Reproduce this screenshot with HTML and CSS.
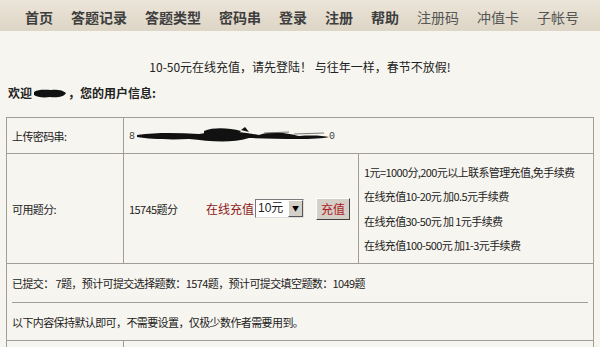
FILE: index.html
```html
<!DOCTYPE html>
<html lang="zh-CN">
<head>
    <meta charset="UTF-8">
    <title>用户信息</title>
    <link rel="stylesheet" href="styles.css">
</head>
<body>
    <div class="nav">
        <a class="nav-item" href="#">首页</a>
        <a class="nav-item" href="#">答题记录</a>
        <a class="nav-item" href="#">答题类型</a>
        <a class="nav-item" href="#">密码串</a>
        <a class="nav-item" href="#">登录</a>
        <a class="nav-item" href="#">注册</a>
        <a class="nav-item" href="#">帮助</a>
        <a class="nav-item light" href="#">注册码</a>
        <a class="nav-item light" href="#">冲值卡</a>
        <a class="nav-item light" href="#">子帐号</a>
    </div>

    <div class="notice">10-50元在线充值，请先登陆！ 与往年一样，春节不放假!</div>

    <div class="welcome">欢迎<svg class="blot" width="34" height="12" viewBox="0 0 34 12"><path d="M1 5 C6 2 12 3 18 3 C24 2 30 3 33 6 C31 10 24 11 17 10 C10 11 4 10 1 8 Z" fill="#111"/></svg>，您的用户信息:</div>

    <table class="info">
        <tr class="row-pass">
            <td class="label">上传密码串:</td>
            <td colspan="2">
                <svg class="scribble" width="210" height="20" viewBox="0 0 210 20">
                    <text x="0" y="13" font-size="10" fill="#444" font-family="Liberation Mono, monospace">8</text>
                    <path d="M8 9 C30 6 50 7 70 8 C90 4 110 5 130 9 C145 4 160 8 170 10 C185 9 195 10 200 11 C190 14 150 13 120 12 C100 18 80 15 60 13 C40 14 20 13 8 11 Z" fill="#111"/>
                    <path d="M75 5 C85 1 100 2 112 5 L108 9 C95 6 85 7 75 8 Z" fill="#111"/>
                    <path d="M112 4 L116 1 L120 6 Z" fill="#111"/>
                    <path d="M135 7 L160 6 M165 8 L195 7" stroke="#777" stroke-width="1"/>
                    <text x="200" y="13" font-size="10" fill="#444" font-family="Liberation Mono, monospace">0</text>
                </svg>
            </td>
        </tr>
        <tr class="row-score">
            <td class="label">可用题分:</td>
            <td class="score-cell">
                <div class="score">
                    <span class="points">15745题分</span>
                    <span class="pay-label">在线充值</span>
                    <span class="select"><span class="select-value">10元</span><span class="select-arrow">▼</span></span>
                    <span class="pay-btn">充值</span>
                </div>
            </td>
            <td class="rates">
                <p>1元=1000分,200元以上联系管理充值,免手续费</p>
                <p>在线充值10-20元 加0.5元手续费</p>
                <p>在线充值30-50元 加 1元手续费</p>
                <p>在线充值100-500元 加1-3元手续费</p>
            </td>
        </tr>
        <tr class="row-info">
            <td colspan="3">
                <p class="submitted">已提交： 7题，预计可提交选择题数：1574题，预计可提交填空题数：1049题</p>
                <div class="rule"></div>
                <p class="hint">以下内容保持默认即可，不需要设置，仅极少数作者需要用到。</p>
            </td>
        </tr>
        <tr class="row-last">
            <td class="label"></td>
            <td colspan="2"></td>
        </tr>
    </table>
</body>
</html>
```

FILE: styles.css
```css
body {
    margin: 0;
    background: #f7f5ef;
    font-family: "Noto Sans CJK SC", "Liberation Sans", sans-serif;
    font-size: 11px;
    color: #222;
    overflow: hidden;
}

.nav {
    height: 31px;
    background: linear-gradient(#ebe5d9, #ddd5c5);
    display: flex;
    align-items: center;
    gap: 18px;
    padding: 2px 0 0 25px;
    box-sizing: border-box;
}

.nav-item {
    font-size: 14px;
    font-weight: bold;
    color: #3e3e3e;
    text-decoration: none;
    line-height: 1;
}

.nav-item.light {
    font-weight: normal;
    color: #555;
}

.notice {
    text-align: center;
    font-size: 12px;
    color: #222;
    margin-top: 28px;
    line-height: 16px;
}

.welcome {
    font-size: 12px;
    font-weight: bold;
    margin: 10px 0 0 8px;
    line-height: 16px;
    display: flex;
    align-items: center;
}

.blot {
    margin: 0 1px;
}

.info {
    border-collapse: collapse;
    margin: 16px 0 0 6px;
    width: 588px;
    table-layout: fixed;
}

.info td {
    border: 1px solid #a39e95;
    padding: 0 5px;
    vertical-align: middle;
    white-space: nowrap;
    letter-spacing: -0.6px;
}

.info td.label {
    width: 106px;
}

.row-pass td {
    height: 35px;
}

.scribble {
    display: block;
}

.row-score td {
    height: 109px;
}

.score-cell {
    width: 223px;
}

.score {
    display: flex;
    align-items: center;
}

.points {
    width: 77px;
}

.pay-label {
    color: #8b1a1a;
    font-size: 12px;
    letter-spacing: 0;
}

.select {
    display: inline-flex;
    align-items: stretch;
    width: 49px;
    height: 19px;
    box-sizing: border-box;
    border: 1px solid #7a7a7a;
    border-right-color: #ddd;
    border-bottom-color: #ddd;
    background: white;
    margin: 0 12px 0 1px;
    letter-spacing: 0;
}

.select-value {
    flex: 1;
    font-family: "Liberation Sans", "Noto Sans CJK SC", sans-serif;
    font-size: 12px;
    line-height: 17px;
    padding-left: 2px;
}

.select-arrow {
    width: 15px;
    background: #d4d0c8;
    border: 1px solid #fff;
    border-right-color: #555;
    border-bottom-color: #555;
    box-sizing: border-box;
    font-size: 7px;
    line-height: 15px;
    text-align: center;
    color: #000;
}

.pay-btn {
    display: inline-block;
    width: 34px;
    height: 22px;
    box-sizing: border-box;
    background: #d4d0c8;
    border: 1px solid #fff;
    border-right-color: #404040;
    border-bottom-color: #404040;
    color: #b0161b;
    font-size: 12px;
    line-height: 19px;
    text-align: center;
    letter-spacing: 0;
}

.rates p {
    margin: 0;
    line-height: 24.5px;
}

.row-info td {
    height: 76px;
}

.submitted {
    margin: 0;
    line-height: 18px;
}

.rule {
    height: 0;
    border-top: 1px solid #a39e95;
    margin: 10px 0 10px 0;
}

.hint {
    margin: 0;
    line-height: 18px;
}

.row-last td {
    height: 20px;
}
```
